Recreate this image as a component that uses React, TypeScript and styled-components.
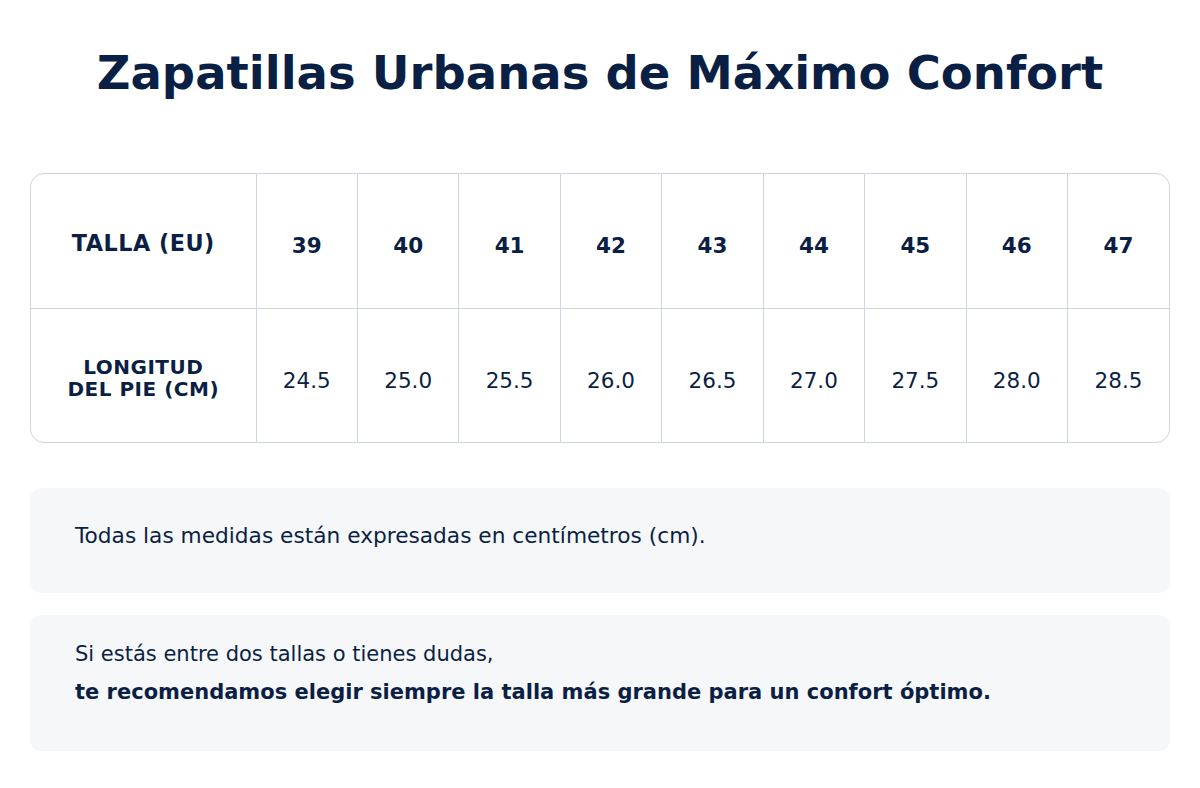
import styled, { createGlobalStyle } from "styled-components";

const sizes = ["39", "40", "41", "42", "43", "44", "45", "46", "47"];
const lengths = ["24.5", "25.0", "25.5", "26.0", "26.5", "27.0", "27.5", "28.0", "28.5"];

function App() {
  return (
    <>
      <GlobalStyle />
      <Page>
        <Title>Zapatillas Urbanas de Máximo Confort</Title>
        <TableFrame>
          <SizeTable>
            <colgroup>
              <col style={{ width: 225 }} />
              {sizes.map((s) => (
                <col key={s} />
              ))}
            </colgroup>
            <tbody>
              <tr>
                <LabelCell $shift={5}>TALLA (EU)</LabelCell>
                {sizes.map((s) => (
                  <Cell key={s} $bold $shift={9}>
                    {s}
                  </Cell>
                ))}
              </tr>
              <tr>
                <LabelCell $small $shift={5}>
                  LONGITUD
                  <br />
                  DEL PIE (CM)
                </LabelCell>
                {lengths.map((l) => (
                  <Cell key={l} $shift={10}>
                    {l}
                  </Cell>
                ))}
              </tr>
            </tbody>
          </SizeTable>
        </TableFrame>

        <Note $pad="29px 45px 38px" $size={21.7}>
          Todas las medidas están expresadas en centímetros (cm).
        </Note>
        <Note $pad="20px 45px 40px" $size={21}>
          Si estás entre dos tallas o tienes dudas,
          <br />
          <strong>te recomendamos elegir siempre la talla más grande para un confort óptimo.</strong>
        </Note>
      </Page>
    </>
  );
}

export default App;

const GlobalStyle = createGlobalStyle`
  body {
    margin: 0;
    background: #ffffff;
    font-family: "DejaVu Sans", Verdana, sans-serif;
    color: #0b1f45;
  }
`;

const Page = styled.div`
  width: 1140px;
  padding: 46px 30px 0;
  display: flex;
  flex-direction: column;
`;

const Title = styled.h1`
  margin: 0 0 72px;
  text-align: center;
  font-size: 46.5px;
  font-weight: 700;
  line-height: 55px;
  color: #0a1f44;
`;

const TableFrame = styled.div`
  border: 1px solid #cdd5e0;
  border-radius: 14px;
  overflow: hidden;
  margin-bottom: 45px;
`;

const SizeTable = styled.table`
  width: 100%;
  table-layout: fixed;
  border-collapse: collapse;

  tr:first-child td,
  tr:first-child th {
    border-bottom: 1px solid #cdd5e0;
  }
  tr {
    height: 134px;
  }
  td:last-child {
    border-right: none;
  }
`;

const Cell = styled.td<{ $bold?: boolean; $shift: number }>`
  border-right: 1px solid #cdd5e0;
  text-align: center;
  vertical-align: middle;
  padding: ${(p) => p.$shift}px 0 0;
  font-size: 21.5px;
  font-weight: ${(p) => (p.$bold ? 700 : 400)};
`;

const LabelCell = styled.th<{ $small?: boolean; $shift: number }>`
  border-right: 1px solid #cdd5e0;
  text-align: center;
  vertical-align: middle;
  padding: ${(p) => p.$shift}px 0 0;
  font-size: ${(p) => (p.$small ? "20px" : "22.3px")};
  line-height: ${(p) => (p.$small ? "22px" : "normal")};
  letter-spacing: 0.5px;
  font-weight: 700;
`;

const Note = styled.div<{ $pad: string; $size: number }>`
  background: #f6f7f9;
  border-radius: 12px;
  padding: ${(p) => p.$pad};
  margin-bottom: 22px;
  font-size: ${(p) => p.$size}px;
  line-height: 38px;

  strong {
    font-weight: 700;
  }
`;
